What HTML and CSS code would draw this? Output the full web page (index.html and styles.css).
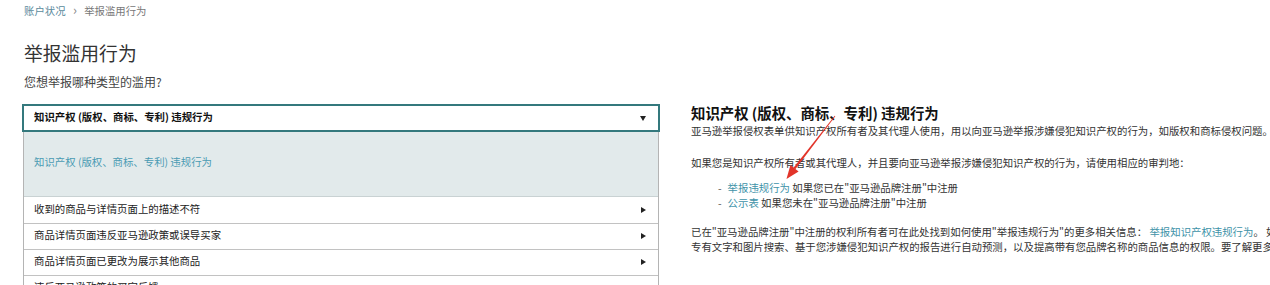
FILE: index.html
```html
<!DOCTYPE html>
<html lang="zh-CN">
<head>
  <meta charset="UTF-8">
  <title>举报滥用行为</title>
  <link rel="stylesheet" href="styles.css">
</head>
<body>
  <div class="breadcrumb">
    <a href="#">账户状况</a>
    <span class="sep">›</span>
    <span>举报滥用行为</span>
  </div>
  <h1>举报滥用行为</h1>
  <div class="subtitle">您想举报哪种类型的滥用?</div>

  <div class="main">
    <div class="left">
      <div class="select">
        <span>知识产权 (版权、商标、专利) 违规行为</span>
        <i class="tri-down"></i>
      </div>
      <div class="options">
        <div class="option-open">知识产权 (版权、商标、专利) 违规行为</div>
        <div class="row"><span>收到的商品与详情页面上的描述不符</span><i class="tri-right"></i></div>
        <div class="row"><span>商品详情页面违反亚马逊政策或误导买家</span><i class="tri-right"></i></div>
        <div class="row"><span>商品详情页面已更改为展示其他商品</span><i class="tri-right"></i></div>
        <div class="row"><span>违反亚马逊政策的买家反馈</span><i class="tri-right"></i></div>
      </div>
    </div>

    <div class="right">
      <h2>知识产权 (版权、商标、专利) 违规行为</h2>
      <p class="p1">亚马逊举报侵权表单供知识产权所有者及其代理人使用，用以向亚马逊举报涉嫌侵犯知识产权的行为，如版权和商标侵权问题。</p>
      <p class="p2">如果您是知识产权所有者或其代理人，并且要向亚马逊举报涉嫌侵犯知识产权的行为，请使用相应的审判地：</p>
      <ul>
        <li><span class="dash">-</span><a href="#">举报违规行为</a> 如果您已在"亚马逊品牌注册"中注册</li>
        <li><span class="dash">-</span><a href="#">公示表</a> 如果您未在"亚马逊品牌注册"中注册</li>
      </ul>
      <p class="p3">已在"亚马逊品牌注册"中注册的权利所有者可在此处找到如何使用"举报违规行为"的更多相关信息： <a href="#">举报知识产权违规行为</a>。 如果您已在品牌注册中注册<br>专有文字和图片搜索、基于您涉嫌侵犯知识产权的报告进行自动预测，以及提高带有您品牌名称的商品信息的权限。要了解更多信息</p>
    </div>
  </div>

  <!-- red annotation arrow drawn over the page -->
  <svg class="arrow" width="1270" height="285" viewBox="0 0 1270 285">
    <polygon points="835.3,116.2 834.7,115.8 793.3,167.9 795.3,169.3" fill="#e2342a"/>
    <polygon points="786.5,179 798.6,171.6 790.4,165" fill="#e2342a"/>
  </svg>
</body>
</html>
```

FILE: styles.css
```css
* {
  box-sizing: border-box;
}
html, body {
  overflow: hidden;
}
body {
  margin: 0;
  padding-left: 22px;
  font-family: "Noto Sans CJK SC", "Noto Sans", sans-serif;
  font-size: 10.4px;
  color: #333;
  background: #fff;
  position: relative;
}
a {
  text-decoration: none;
  color: #3d92a8;
}
.breadcrumb {
  margin-top: 3px;
  padding-left: 2px;
  line-height: 14px;
  color: #777;
}
.breadcrumb a {
  color: #5a8a9c;
}
.breadcrumb .sep {
  margin: 0 5px;
  color: #888;
  font-size: 13px;
}
h1 {
  margin: 23px 0 0 2px;
  font-size: 18.8px;
  font-weight: 400;
  line-height: 24px;
  color: #333;
}
.subtitle {
  margin: 9px 0 0 2px;
  font-size: 12px;
  line-height: 16px;
  color: #444;
}
.main {
  display: flex;
  margin-top: 14px;
}
.left {
  width: 638px;
  flex: none;
}
.select {
  height: 28px;
  border: 2px solid #34797d;
  display: flex;
  align-items: center;
  justify-content: space-between;
  padding: 0 12px 3px 10px;
  font-weight: 700;
  color: #111;
}
.tri-down {
  width: 0;
  height: 0;
  margin-top: 3px;
  border-left: 3.5px solid transparent;
  border-right: 3.5px solid transparent;
  border-top: 5px solid #222;
}
.tri-right {
  width: 0;
  height: 0;
  margin-top: 3px;
  border-top: 3.5px solid transparent;
  border-bottom: 3.5px solid transparent;
  border-left: 5px solid #222;
}
.options {
  margin: 0 1px;
  border-left: 1px solid #b4b4b4;
  border-right: 1px solid #b4b4b4;
}
.option-open {
  height: 64px;
  background: #e2eaeb;
  display: flex;
  align-items: center;
  padding: 0 0 5px 10px;
  color: #4a9bb3;
}
.row {
  height: 26px;
  border-top: 1px solid #c2c2c2;
  display: flex;
  align-items: center;
  justify-content: space-between;
  padding: 0 12px 4px 10px;
  color: #222;
}
.option-open + .row {
  height: 27px;
  border-top: 1px solid #c9d2d3;
}
.right {
  margin-left: 31px;
  flex: none;
  white-space: nowrap;
  color: #333;
}
.right h2 {
  margin: 0;
  font-size: 14.4px;
  font-weight: 700;
  line-height: 18px;
  color: #111;
}
.right p {
  margin: 0;
  line-height: 15px;
}
.p1 {
  margin-top: 1px !important;
}
.p2 {
  margin-top: 17px !important;
}
.right ul {
  list-style: none;
  margin: 10px 0 0;
  padding-left: 27px;
}
.right li {
  line-height: 15px;
}
.dash {
  margin-right: 6px;
  color: #555;
}
.p3 {
  margin-top: 14px !important;
}
.arrow {
  position: absolute;
  left: 0;
  top: 0;
  pointer-events: none;
}
```
